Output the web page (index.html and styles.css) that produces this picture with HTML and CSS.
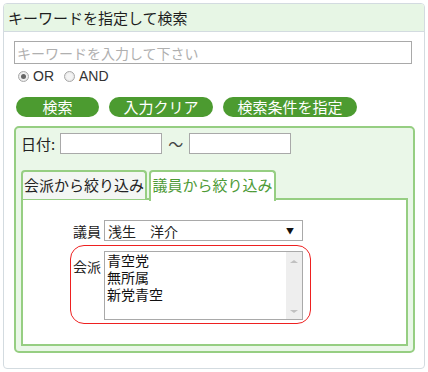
FILE: index.html
```html
<!DOCTYPE html>
<html lang="ja">
<head>
    <meta charset="UTF-8">
    <title>キーワード検索</title>
    <link rel="stylesheet" href="styles.css">
</head>
<body>
    <div class="panel">
        <div class="panel-head">キーワードを指定して検索</div>
        <div class="panel-body">
            <input type="text" class="keyword" placeholder="キーワードを入力して下さい">
            <div class="radios">
                <label class="radio-item"><span class="radio checked"></span>OR</label>
                <label class="radio-item"><span class="radio"></span>AND</label>
            </div>
            <div class="buttons">
                <button class="btn btn-search">検索</button>
                <button class="btn btn-clear">入力クリア</button>
                <button class="btn btn-cond">検索条件を指定</button>
            </div>

            <div class="cond">
                <div class="date-row">
                    <span class="date-label">日付:</span>
                    <input type="text" class="date-input">
                    <span class="tilde">～</span>
                    <input type="text" class="date-input">
                </div>

                <div class="tabs">
                    <div class="tab">会派から絞り込み</div>
                    <div class="tab active">議員から絞り込み</div>
                </div>
                <div class="tab-panel">
                    <div class="member-row">
                        <span class="field-label">議員</span>
                        <div class="select">
                            <span>浅生　洋介</span>
                            <span class="select-arrow">▼</span>
                        </div>
                    </div>
                    <div class="party-box">
                        <span class="field-label">会派</span>
                        <div class="listbox">
                            <ul class="options">
                                <li>青空党</li>
                                <li>無所属</li>
                                <li>新党青空</li>
                            </ul>
                            <div class="scrollbar">
                                <span class="arrow-up"></span>
                                <span class="arrow-down"></span>
                            </div>
                        </div>
                    </div>
                </div>
            </div>
        </div>
    </div>
</body>
</html>
```

FILE: styles.css
```css
body {
    margin: 0;
    padding: 3px;
    background-color: #ffffff;
    font-family: "Noto Sans CJK JP", "DejaVu Sans", sans-serif;
    color: #222222;
}

.panel {
    width: 422px;
    height: 366px;
    box-sizing: border-box;
    border: 1px solid #d3dbe0;
    border-radius: 4px;
    overflow: hidden;
}

.panel-head {
    height: 27px;
    line-height: 27px;
    padding-left: 4px;
    font-size: 15px;
    background-color: #e7f6e5;
    border-bottom: 1px solid #d3dbe0;
    color: #1e1e1e;
}

.panel-body {
    padding: 9px 9px 0 10px;
}

.keyword {
    display: block;
    width: 398px;
    height: 23px;
    box-sizing: border-box;
    margin: 0;
    padding: 0 2px;
    border: 1px solid #a9a9a9;
    font-family: inherit;
    font-size: 14px;
}

.keyword::placeholder {
    color: #b0b0b0;
}

.radios {
    display: flex;
    align-items: center;
    height: 20px;
    margin-top: 2px;
    padding-left: 4px;
    font-family: "Liberation Sans", sans-serif;
    font-size: 14px;
    color: #333333;
}

.radio-item {
    display: flex;
    align-items: center;
    margin-right: 10px;
}

.radio {
    width: 11px;
    height: 11px;
    margin-right: 4px;
    border: 1px solid #a8a8a8;
    border-radius: 50%;
    background: radial-gradient(circle, #f4f4f4 40%, #dcdcdc 100%);
    box-sizing: border-box;
    position: relative;
}

.radio.checked::after {
    content: "";
    position: absolute;
    left: 2px;
    top: 2px;
    width: 5px;
    height: 5px;
    border-radius: 50%;
    background-color: #666666;
}

.buttons {
    display: flex;
    margin-top: 11px;
    padding-left: 2px;
}

.btn {
    height: 20px;
    margin: 0 10px 0 0;
    padding: 0;
    border: none;
    border-radius: 10px;
    background-color: #4c9b30;
    color: #ffffff;
    font-family: inherit;
    font-size: 15px;
    line-height: 20px;
}

.btn-search {
    width: 83px;
}

.btn-clear {
    width: 104px;
}

.btn-cond {
    width: 134px;
}

.cond {
    width: 401px;
    height: 227px;
    box-sizing: border-box;
    margin-top: 9px;
    padding: 5px 5px 0 5px;
    border: 2px solid #96ce82;
    border-radius: 5px;
    background-color: #eaf7e8;
}

.date-row {
    display: flex;
    align-items: center;
    height: 21px;
    font-size: 15px;
}

.date-label {
    margin-right: 5px;
}

.date-input {
    width: 102px;
    height: 21px;
    box-sizing: border-box;
    margin: 0;
    border: 1px solid #a9a9a9;
    background-color: #ffffff;
}

.tilde {
    width: 27px;
    text-align: center;
    color: #444444;
}

.tabs {
    display: flex;
    margin-top: 16px;
    height: 29px;
}

.tab {
    width: 126px;
    box-sizing: border-box;
    margin-right: 2px;
    border: 2px solid #96ce82;
    border-bottom: none;
    border-radius: 4px 4px 0 0;
    background-color: #f3f6f3;
    font-size: 15px;
    line-height: 26px;
    text-align: center;
}

.tab.active {
    width: 127px;
    height: 31px;
    background-color: #ffffff;
    color: #4e9a36;
    position: relative;
    z-index: 1;
}

.tab-panel {
    width: 387px;
    height: 148px;
    box-sizing: border-box;
    margin-top: -1px;
    padding: 20px 0 0 47px;
    border: 2px solid #96ce82;
    background-color: #ffffff;
}

.field-label {
    width: 31px;
    font-size: 14px;
    color: #222222;
}

.member-row {
    display: flex;
    align-items: flex-end;
    padding-left: 3px;
}

.select {
    display: flex;
    justify-content: space-between;
    align-items: center;
    width: 199px;
    height: 21px;
    box-sizing: border-box;
    padding: 0 8px 0 3px;
    border: 1px solid #a9a9a9;
    font-size: 14px;
}

.select-arrow {
    font-size: 8px;
    color: #111111;
}

.party-box {
    display: flex;
    width: 241px;
    height: 79px;
    box-sizing: border-box;
    margin-top: 4px;
    padding: 5px 7px 3px 2px;
    border: 1px solid #ee2020;
    border-radius: 14px;
}

.party-box .field-label {
    padding-top: 5px;
}

.listbox {
    display: flex;
    width: 199px;
    height: 69px;
    box-sizing: border-box;
    border: 1px solid #a9a9a9;
}

.options {
    flex: 1;
    margin: 0;
    padding: 1px 0 0 2px;
    list-style: none;
    font-family: "Liberation Sans", "Noto Sans CJK JP", sans-serif;
    font-size: 14px;
    line-height: 17px;
    color: #111111;
}

.scrollbar {
    width: 16px;
    background-color: #eeeeee;
    display: flex;
    flex-direction: column;
    justify-content: space-between;
    align-items: center;
    padding: 8px 0 6px;
}

.arrow-up,
.arrow-down {
    width: 0;
    height: 0;
    border-left: 4px solid transparent;
    border-right: 4px solid transparent;
}

.arrow-up {
    border-bottom: 3px solid #c0c0c0;
}

.arrow-down {
    border-top: 3px solid #c0c0c0;
}
```
